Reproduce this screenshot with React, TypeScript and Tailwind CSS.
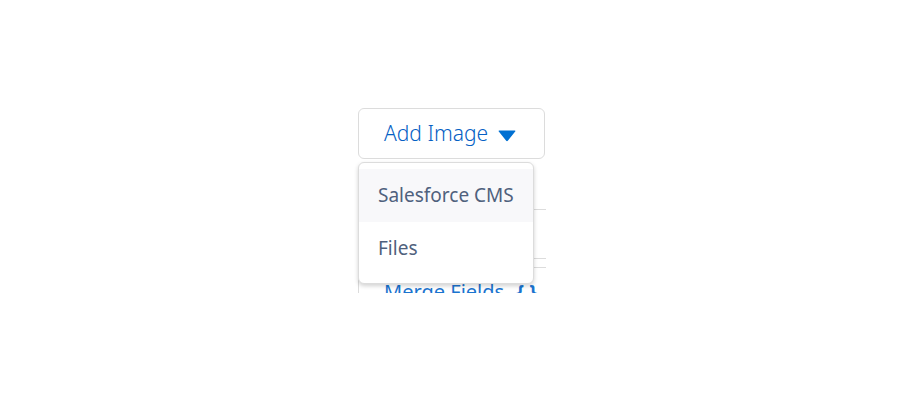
const menuItems = [
  { id: "cms", label: "Salesforce CMS", active: true },
  { id: "files", label: "Files", active: false },
];

function AddImageMenu() {
  return (
    <div className="relative">
      <button
        type="button"
        aria-haspopup="menu"
        aria-expanded="true"
        className="flex h-[51px] w-full items-center gap-2.5 rounded-md border border-[#dcdcdc] bg-white pl-[25px] text-[21px] font-light text-[#0560c4]"
      >
        Add Image
        <svg viewBox="0 0 18 12" className="mt-1 h-3 w-[18px] fill-[#0070d2]" aria-hidden="true">
          <path d="M1.2.5h15.6c.7 0 .9.6.4 1.1l-7.4 9.2c-.5.6-1.1.6-1.6 0L.8 1.6C.3 1.1.5.5 1.2.5z" />
        </svg>
      </button>
      <ul
        role="menu"
        className="absolute top-full left-0 z-10 mt-[3px] w-44 rounded-md border border-[#dcdcdc] bg-white pt-1.5 pb-2 shadow-[0_2px_4px_rgba(0,0,0,0.18)]"
      >
        {menuItems.map((item) => (
          <li key={item.id} role="none">
            <button
              type="button"
              role="menuitem"
              className={`flex h-[53px] w-full items-center px-[19px] text-[19px] whitespace-nowrap text-[#4f617d] ${
                item.active ? "bg-[#f8f8fa]" : "bg-white"
              }`}
            >
              {item.label}
            </button>
          </li>
        ))}
      </ul>
    </div>
  );
}

export default function App() {
  return (
    <main className="bg-white pt-[108px] font-['Noto_Sans',sans-serif]">
      <div className="mx-auto h-[185px] w-48 overflow-hidden pl-1">
        <div className="pr-px">
          <AddImageMenu />
        </div>
        <div className="mt-[50px] h-[50px] border-y border-[#dcdcdc]" />
        <button
          type="button"
          className="mt-2 flex h-[51px] w-56 items-center gap-3 rounded-tl-md border border-[#dcdcdc] bg-white pb-0.5 pl-[25px] text-xl whitespace-nowrap text-[#1b74cf]"
        >
          Merge Fields
          <span className="font-bold">{"{ }"}</span>
        </button>
      </div>
    </main>
  );
}
